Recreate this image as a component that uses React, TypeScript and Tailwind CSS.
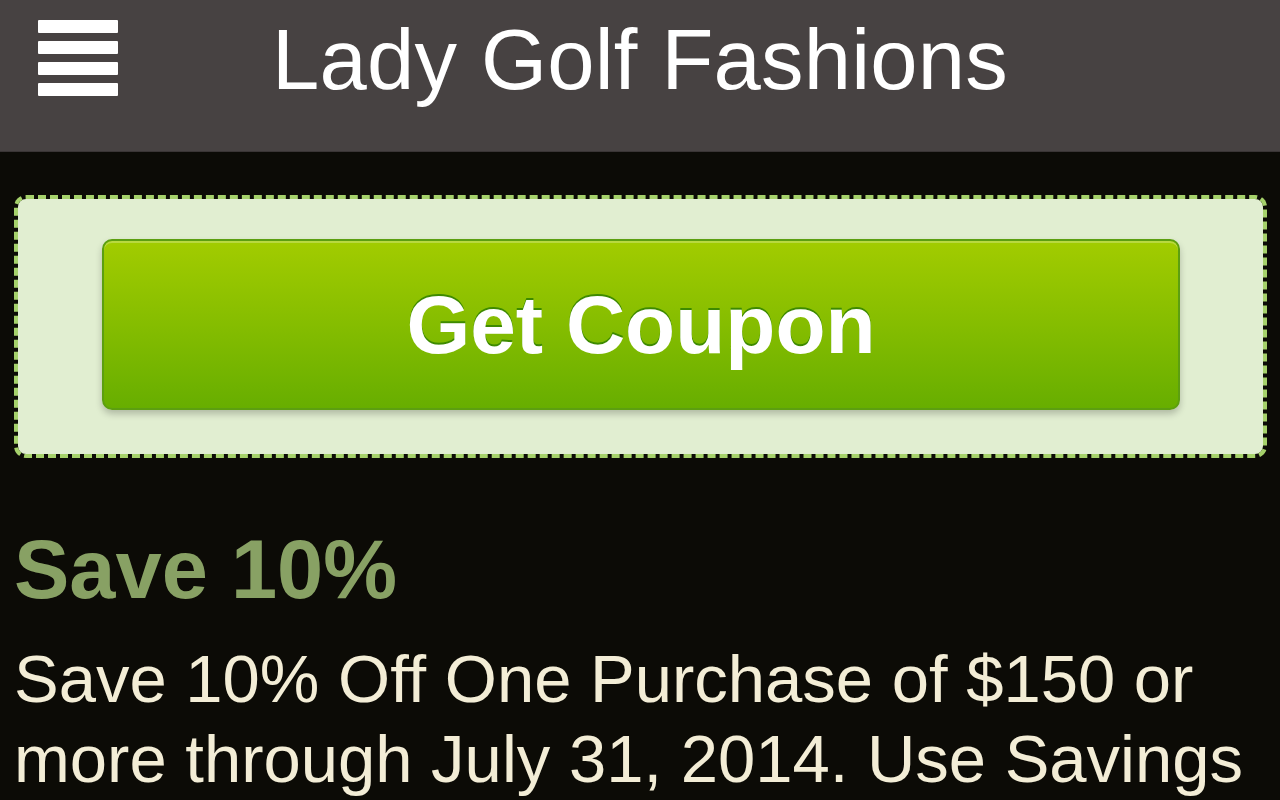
const Header = () => {
  return (
    <header className="h-[152px] bg-[#474242] border-b border-[#3a3535] grid grid-cols-[1fr_auto_1fr] items-start">
      <button className="ml-[38px] mt-[20px] flex flex-col gap-[8px] w-[80px]" aria-label="Menu">
        <span className="block h-[13px] bg-white rounded-[1px]" />
        <span className="block h-[13px] bg-white rounded-[1px]" />
        <span className="block h-[13px] bg-white rounded-[1px]" />
        <span className="block h-[13px] bg-white rounded-[1px]" />
      </button>
      <h1 className="mt-[17px] text-[85px] leading-none text-white tracking-[0.2px]">
        Lady Golf Fashions
      </h1>
      <div />
    </header>
  );
};

const CouponBox = () => {
  return (
    <div className="mt-[43px] mr-[13px] ml-[14px] rounded-[12px] border-[4px] border-dashed border-[#a6d26b] bg-[#e1eed1] bg-clip-padding pl-[84px] pr-[83px] pt-[40px] pb-[44px]">
      <button className="w-full h-[171px] rounded-[10px] border-2 border-[#5c9f10] bg-gradient-to-b from-[#a2cc00] to-[#67ae00] shadow-[inset_0_2px_0_rgba(255,255,255,0.25),0_4px_7px_rgba(0,0,0,0.22)] flex items-center justify-center">
        <span className="text-[82px] leading-none font-bold text-white [text-shadow:0_-2px_0_#3d8a00]">
          Get Coupon
        </span>
      </button>
    </div>
  );
};

export default function App() {
  return (
    <div className="h-screen overflow-hidden bg-[#0c0b06] font-['Liberation_Sans',Arial,sans-serif]">
      <Header />
      <CouponBox />
      <div className="pl-[14px] pr-[12px]">
        <h2 className="mt-[70px] text-[83px] leading-none font-bold text-[#88a164]">
          Save 10%
        </h2>
        <p className="mt-[28px] text-[67px] leading-[80px] text-[#f3edd6]">
          Save 10% Off One Purchase of $150 or more through July 31, 2014. Use Savings
          Code at checkout to receive your discount.
        </p>
      </div>
    </div>
  );
}
